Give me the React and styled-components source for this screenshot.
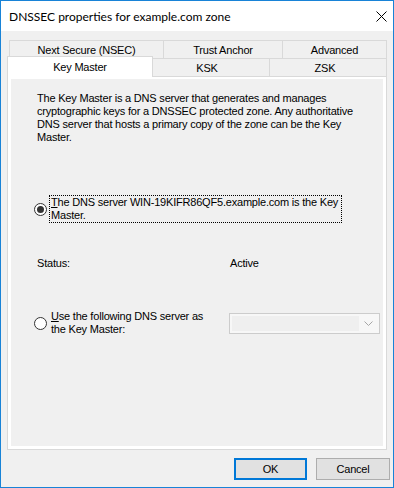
import React from "react";
import styled, { createGlobalStyle } from "styled-components";

const GlobalStyle = createGlobalStyle`
  html, body {
    margin: 0;
    padding: 0;
    background: #fff;
  }
  body {
    font-family: "Liberation Sans", Arial, sans-serif;
    font-size: 11px;
    letter-spacing: -0.2px;
    color: #000;
  }
  * {
    box-sizing: border-box;
  }
`;

const Window = styled.div`
  width: 394px;
  height: 488px;
  border: 1px solid #1883d7;
  background: #f0f0f0;
  display: flex;
  flex-direction: column;
`;

const TitleBar = styled.div`
  height: 30px;
  flex: none;
  background: #fff;
  display: flex;
  align-items: center;
  justify-content: space-between;
  padding: 0 6px 0 8px;
  font-family: Lato, "Liberation Sans", sans-serif;
  font-size: 12px;
  letter-spacing: 0;
`;

const Body = styled.div`
  flex: 1;
  display: flex;
  flex-direction: column;
  padding-top: 9px;
`;

const TabStrip = styled.div`
  margin: 0 6px;
  display: flex;
  flex-direction: column;
`;

const TabRow = styled.div`
  display: flex;
  align-items: flex-start;
  padding-left: ${(p) => (p.$inset ? 2 : 0)}px;
`;

const Tab = styled.div`
  width: ${(p) => p.$w}px;
  height: 18px;
  border: 1px solid #d9d9d9;
  border-bottom: none;
  background: #f0f0f0;
  display: flex;
  align-items: center;
  justify-content: center;
  padding-right: ${(p) => p.$shift || 0}px;
  white-space: nowrap;

  & + & {
    border-left: none;
  }
`;

const ActiveTab = styled(Tab)`
  position: relative;
  z-index: 1;
  height: 21px;
  margin-top: -2px;
  margin-bottom: -1px;
  background: #fff;
  padding-bottom: 1px;
`;

const Panel = styled.div`
  margin: 0 6px;
  height: 374px;
  flex: none;
  border: 1px solid #d9d9d9;
  background: #fff;
  padding: 2px 3px 3px 3px;
  display: flex;
`;

const Page = styled.div`
  flex: 1;
  background: #f0f0f0;
  padding: 13px 0 0 23px;
  display: flex;
  flex-direction: column;
`;

const Description = styled.p`
  margin: 0 0 0 3px;
  line-height: 13px;
  white-space: nowrap;
`;

const RadioRow = styled.div`
  display: flex;
  align-items: center;
  margin-top: ${(p) => p.$top}px;
`;

const Radio = styled.span`
  width: 13px;
  height: 13px;
  flex: none;
  border-radius: 50%;
  border: 1px solid #333;
  background: #fff;
  display: flex;
  align-items: center;
  justify-content: center;

  &::after {
    content: "";
    width: 7px;
    height: 7px;
    border-radius: 50%;
    background: ${(p) => (p.$checked ? "#333" : "transparent")};
  }
`;

const RadioLabel = styled.label`
  margin-left: 2px;
  width: ${(p) => p.$w}px;
  padding: 0 1px;
  line-height: 13px;
  white-space: nowrap;
  border: 1px dotted ${(p) => (p.$focused ? "#000" : "transparent")};
`;

const StatusRow = styled.div`
  display: grid;
  grid-template-columns: 193px auto;
  margin: 34px 0 0 3px;
  line-height: 13px;
`;

const ComboBox = styled.div`
  margin-left: 4px;
  width: 151px;
  height: 21px;
  border: 1px solid #cccccc;
  background: #f7f7f7;
  display: flex;
  align-items: center;
  padding: 2px;
`;

const ComboField = styled.div`
  width: 127px;
  height: 100%;
  background: #efefef;
`;

const ComboArrow = styled.div`
  flex: 1;
  display: flex;
  align-items: center;
  justify-content: center;
`;

const ButtonRow = styled.div`
  display: flex;
  justify-content: flex-end;
  gap: 9px;
  padding: 8px 3px 0 0;
`;

const Button = styled.button`
  width: ${(p) => p.$w}px;
  height: 22px;
  padding: 0;
  font-family: "Liberation Sans", Arial, sans-serif;
  font-size: 11px;
  letter-spacing: -0.2px;
  color: #000;
  background: #e1e1e1;
  border: ${(p) => (p.$default ? "2px solid #0078d7" : "1px solid #adadad")};
`;

const Key = styled.u`
  text-decoration: underline;
`;

export default function App() {
  return (
    <>
      <GlobalStyle />
      <Window>
        <TitleBar>
          <span>DNSSEC properties for example.com zone</span>
          <svg width="11" height="11" viewBox="0 0 11 11">
            <path d="M0.5 0.5 L10.5 10.5 M10.5 0.5 L0.5 10.5" stroke="#000" strokeWidth="1" />
          </svg>
        </TitleBar>
        <Body>
          <TabStrip>
            <TabRow $inset>
              <Tab $w={155}>Next Secure (NSEC)</Tab>
              <Tab $w={119}>Trust Anchor</Tab>
              <Tab $w={104}>Advanced</Tab>
            </TabRow>
            <TabRow>
              <ActiveTab $w={146}>Key Master</ActiveTab>
              <Tab $w={117} $shift={8}>KSK</Tab>
              <Tab $w={117} $shift={6}>ZSK</Tab>
            </TabRow>
          </TabStrip>
          <Panel>
            <Page>
              <Description>
                The Key Master is a DNS server that generates and manages
                <br />
                cryptographic keys for a DNSSEC protected zone. Any authoritative
                <br />
                DNS server that hosts a primary copy of the zone can be the Key
                <br />
                Master.
              </Description>
              <RadioRow $top={51}>
                <Radio $checked />
                <RadioLabel $w={293} $focused>
                  <Key>T</Key>he DNS server WIN-19KIFR86QF5.example.com is the Key
                  <br />
                  Master.
                </RadioLabel>
              </RadioRow>
              <StatusRow>
                <span>Status:</span>
                <span>Active</span>
              </StatusRow>
              <RadioRow $top={39}>
                <Radio />
                <RadioLabel $w={176}>
                  <Key>U</Key>se the following DNS server as
                  <br />
                  the Key Master:
                </RadioLabel>
                <ComboBox>
                  <ComboField />
                  <ComboArrow>
                    <svg width="9" height="5" viewBox="0 0 9 5">
                      <path d="M0.5 0.5 L4.5 4.5 L8.5 0.5" stroke="#a6a6a6" fill="none" strokeWidth="1" />
                    </svg>
                  </ComboArrow>
                </ComboBox>
              </RadioRow>
            </Page>
          </Panel>
          <ButtonRow>
            <Button $w={73} $default>OK</Button>
            <Button $w={74}>Cancel</Button>
          </ButtonRow>
        </Body>
      </Window>
    </>
  );
}
